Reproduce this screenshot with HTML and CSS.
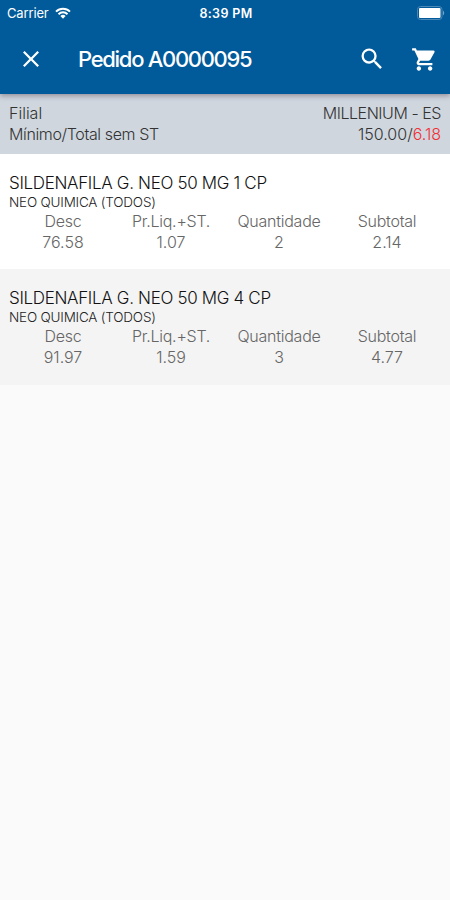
FILE: index.html
```html
<!DOCTYPE html>
<html lang="pt-BR">
<head>
<meta charset="utf-8">
<title>Pedido A0000095</title>
<link rel="stylesheet" href="styles.css">
</head>
<body>
<header class="top">
  <div class="status">
    <div class="carrier"><span class="carrier-name">Carrier</span>
      <svg class="wifi" viewBox="0 0 16 12"><path d="M1 4.6a10 10 0 0 1 14 0M3.5 7.2a6.4 6.4 0 0 1 9 0" fill="none" stroke="#fff" stroke-width="2"/><path d="M5.4 9.1a3.7 3.7 0 0 1 5.2 0L8 11.8z" fill="#fff"/></svg>
    </div>
    <span class="clock">8:39 PM</span>
    <svg class="battery" viewBox="0 0 28 14"><rect x=".5" y=".5" width="24.5" height="13" rx="3" fill="none" stroke="#4a88b8"/><rect x="2" y="2" width="21.5" height="10" rx="1" fill="#fff"/><path d="M26.2 4.5q2 2.5 0 5z" fill="#8fb5d4"/></svg>
  </div>
  <div class="bar">
    <svg class="close" viewBox="5 5 14 14"><path d="M19 6.41L17.59 5 12 10.59 6.41 5 5 6.41 10.59 12 5 17.59 6.41 19 12 13.41 17.59 19 19 17.59 13.41 12z"/></svg>
    <h1 class="title">Pedido A0000095</h1>
    <svg class="search" viewBox="0 0 24 24"><path d="M15.5 14h-.79l-.28-.27A6.471 6.471 0 0 0 16 9.5 6.5 6.5 0 1 0 9.5 16c1.61 0 3.09-.59 4.23-1.57l.27.28v.79l5 4.99L20.49 19l-4.99-5zm-6 0C7.01 14 5 11.99 5 9.5S7.01 5 9.5 5 14 7.01 14 9.5 11.99 14 9.5 14z"/></svg>
    <svg class="cart" viewBox="0 0 24 24"><path d="M7 18c-1.1 0-1.99.9-1.99 2S5.9 22 7 22s2-.9 2-2-.9-2-2-2zM1 2v2h2l3.6 7.59-1.35 2.45c-.16.28-.25.61-.25.96 0 1.1.9 2 2 2h12v-2H7.42c-.14 0-.25-.11-.25-.25l.03-.12.9-1.63h7.45c.75 0 1.41-.41 1.75-1.03l3.58-6.49A1.003 1.003 0 0 0 20 4H5.21l-.94-2H1zm16 16c-1.1 0-1.99.9-1.99 2s.89 2 1.99 2 2-.9 2-2-.9-2-2-2z"/></svg>
  </div>
</header>
<section class="summary">
  <div class="line"><span class="branch">Filial</span><span class="branch-name">MILLENIUM - ES</span></div>
  <div class="line"><span class="minimum">Mínimo/Total sem ST</span><span class="amount">150.00/<b class="low">6.18</b></span></div>
</section>
<main>
  <article class="item">
    <h2 class="name">SILDENAFILA G. NEO 50 MG 1 CP</h2>
    <p class="maker">NEO QUIMICA (TODOS)</p>
    <div class="grid">
      <span class="label">Desc</span><span class="label">Pr.Liq.+ST.</span><span class="label">Quantidade</span><span class="label">Subtotal</span>
      <span>76.58</span><span>1.07</span><span>2</span><span>2.14</span>
    </div>
  </article>
  <article class="item alt">
    <h2 class="name">SILDENAFILA G. NEO 50 MG 4 CP</h2>
    <p class="maker">NEO QUIMICA (TODOS)</p>
    <div class="grid">
      <span class="label">Desc</span><span class="label">Pr.Liq.+ST.</span><span class="label">Quantidade</span><span class="label">Subtotal</span>
      <span>91.97</span><span>1.59</span><span>3</span><span>4.77</span>
    </div>
  </article>
</main>
</body>
</html>
```
FILE: styles.css
```css
* { box-sizing: border-box; margin: 0; padding: 0; }
body { background: #fafafa; font-family: Inter, Roboto, sans-serif; font-weight: 300; min-height: 900px; white-space: nowrap; }
svg { display: block; flex: none; }
.top { position: relative; height: 94px; background: #015a99; color: #fff; box-shadow: 0 2px 5px rgba(60, 40, 60, .4); }
.status { display: grid; grid-template-columns: 1fr auto 1fr; align-items: center; height: 26px; padding: 0 5px 0 7px; }
.carrier { display: flex; align-items: center; gap: 6px; font-size: 13px; font-weight: 400; letter-spacing: -.15px; }
.wifi { width: 16px; height: 12px; }
.clock { font-size: 12.5px; font-weight: 600; letter-spacing: .35px; }
.battery { width: 28px; height: 14px; justify-self: end; }
.bar { display: flex; align-items: center; height: 66px; padding: 0 12px 0 23px; }
.bar svg { fill: #fff; }
.close { width: 16px; height: 16px; }
.title { flex: 1; margin-left: 39px; font-size: 22px; font-weight: 500; letter-spacing: -1.3px; }
.search { width: 28px; height: 28px; margin-right: 25px; }
.cart { width: 27px; height: 27px; }
.summary { height: 60px; padding: 9px 9px 0; background: #cfd6de; color: #333; }
.line { display: flex; justify-content: space-between; font-size: 16px; line-height: 20.5px; }
.branch-name { letter-spacing: -.45px; }
.minimum { letter-spacing: -.37px; }
.low { color: #f22e35; font-weight: 300; }
.item { height: 116px; padding: 19px 9px 0; background: #fff; }
.alt { background: #f4f4f4; margin-top: -1px; }
.name { font-size: 17px; font-weight: 300; line-height: 20px; letter-spacing: -.33px; color: #111; }
.maker { font-size: 13.5px; line-height: 18px; letter-spacing: -.2px; color: #222; }
.grid { display: grid; grid-template-columns: repeat(4, 1fr); text-align: center; font-size: 16px; line-height: 20.5px; color: #666; }
.label { letter-spacing: -.25px; }
```
